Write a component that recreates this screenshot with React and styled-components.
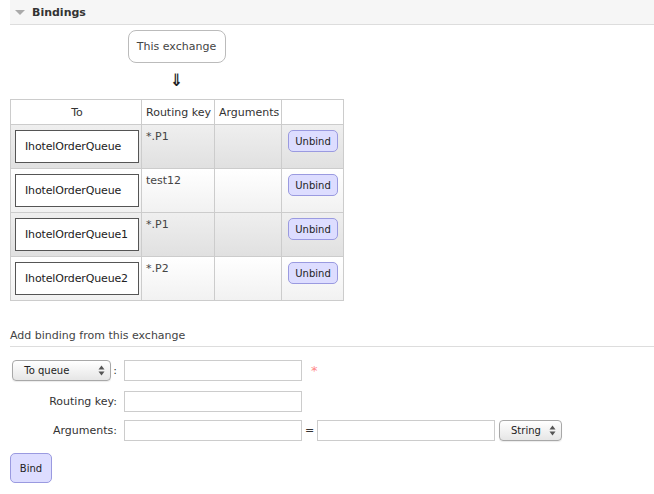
import React from 'react';
import styled, { createGlobalStyle } from 'styled-components';

const GlobalStyle = createGlobalStyle`
  body {
    margin: 0;
    background: #fff;
    font-family: "DejaVu Sans", Verdana, sans-serif;
    font-size: 11px;
    color: #444;
  }
`;

const Page = styled.div`
  padding-left: 10px;
`;

const SectionHeader = styled.h2`
  margin: 0;
  height: 24px;
  display: flex;
  align-items: center;
  gap: 7px;
  padding-left: 5px;
  background: #f6f6f6;
  border-bottom: 1px solid #ddd;
  font-size: 11px;
  font-weight: bold;
  color: #333;
`;

const Triangle = styled.span`
  width: 0;
  height: 0;
  border-left: 5px solid transparent;
  border-right: 5px solid transparent;
  border-top: 5px solid #aaa;
`;

const Diagram = styled.div`
  width: 333px;
  display: flex;
  flex-direction: column;
  align-items: center;
`;

const ExchangeBox = styled.div`
  margin-top: 5px;
  width: 98px;
  height: 33px;
  box-sizing: border-box;
  border: 1px solid #bbb;
  border-radius: 8px;
  display: flex;
  align-items: center;
  justify-content: center;
  color: #444;
`;

const Arrow = styled.div`
  margin: 8px 0 9px;
  height: 19px;
  line-height: 19px;
  font-family: "DejaVu Sans Condensed", "DejaVu Sans", sans-serif;
  font-size: 17px;
  font-weight: bold;
  color: #222;
`;

const Table = styled.table`
  border-collapse: collapse;
  table-layout: fixed;
  width: 334px;

  th,
  td {
    border: 1px solid #ccc;
  }
`;

const HeadCell = styled.th`
  height: 24px;
  padding: 0 2px 0 4px;
  white-space: nowrap;
  font-weight: normal;
  color: #333;
  text-align: ${p => (p.$center ? 'center' : 'left')};
`;

const Row = styled.tr`
  background: ${p =>
    p.$alt
      ? 'linear-gradient(#efefef, #e0e0e0)'
      : 'linear-gradient(#ffffff, #f1f1f1)'};
`;

const Cell = styled.td`
  vertical-align: top;
  height: 33px;
  padding: 5px 3px 5px 4px;
  color: #444;
  line-height: 14px;
`;

const QueueBox = styled.div`
  width: 124px;
  height: 33px;
  box-sizing: border-box;
  border: 1px solid #555;
  background: #fff;
  display: flex;
  align-items: center;
  padding-left: 9px;
  white-space: nowrap;
  letter-spacing: -0.15px;
  color: #222;
`;

const Button = styled.button`
  display: block;
  width: ${p => p.$w}px;
  height: ${p => p.$h}px;
  margin: ${p => p.$margin || 0};
  padding: 0;
  background: #ddf;
  border: 1px solid #9a9ae0;
  border-radius: 5px;
  font-family: "DejaVu Sans", Verdana, sans-serif;
  font-size: 10px;
  color: #222;
`;

const FormTitle = styled.h3`
  margin: 28px 0 0;
  padding-bottom: 3px;
  line-height: 14px;
  font-size: 11px;
  font-weight: normal;
  color: #444;
  border-bottom: 1px solid #ddd;
`;

const Form = styled.form`
  margin-top: 13px;
  display: flex;
  flex-direction: column;
  gap: ${p => p.$gap || 10}px;
`;

const FormRow = styled.div`
  display: flex;
  align-items: center;
  height: ${p => p.$h || 21}px;
  margin-bottom: ${p => p.$mb || 0}px;
`;

const LabelCell = styled.label`
  width: 107px;
  margin-right: 7px;
  display: flex;
  justify-content: flex-end;
  align-items: center;
  gap: 2px;
  color: #333;
`;

const TextInput = styled.input`
  width: 178px;
  height: 21px;
  box-sizing: border-box;
  border: 1px solid #ccc;
  margin: 0;
  padding: 0 3px;
`;

const Select = styled.div`
  width: ${p => p.$w}px;
  height: 21px;
  box-sizing: border-box;
  display: flex;
  align-items: center;
  justify-content: space-between;
  margin-left: ${p => p.$ml || 0}px;
  padding: 0 5px 0 ${p => p.$pl}px;
  background: linear-gradient(#ffffff, #e6e6e6);
  border: 1px solid #a8a8a8;
  border-radius: 4px;
  box-shadow: 0 1px 1px rgba(0, 0, 0, 0.08);
  font-size: 10px;
  color: #222;
`;

const Required = styled.span`
  margin-left: 9px;
  color: #f88;
  font-size: 13px;
`;

const Equals = styled.span`
  width: 15px;
  text-align: center;
  color: #333;
`;

const Updown = () => (
  <svg width="7" height="11" viewBox="0 0 7 11">
    <path d="M3.5 0.5 L6.5 4.5 H0.5 Z" fill="#555" />
    <path d="M3.5 10.5 L6.5 6.5 H0.5 Z" fill="#555" />
  </svg>
);

const bindings = [
  { queue: 'IhotelOrderQueue', key: '*.P1' },
  { queue: 'IhotelOrderQueue', key: 'test12' },
  { queue: 'IhotelOrderQueue1', key: '*.P1' },
  { queue: 'IhotelOrderQueue2', key: '*.P2' }
];

export default function App() {
  return (
    <Page>
      <GlobalStyle />
      <SectionHeader>
        <Triangle />
        Bindings
      </SectionHeader>
      <Diagram>
        <ExchangeBox>This exchange</ExchangeBox>
        <Arrow>⇓</Arrow>
      </Diagram>
      <Table>
        <colgroup>
          <col style={{ width: 131 }} />
          <col style={{ width: 73 }} />
          <col style={{ width: 67 }} />
          <col style={{ width: 62 }} />
        </colgroup>
        <thead>
          <tr>
            <HeadCell $center>To</HeadCell>
            <HeadCell>Routing key</HeadCell>
            <HeadCell>Arguments</HeadCell>
            <HeadCell />
          </tr>
        </thead>
        <tbody>
          {bindings.map((b, i) => (
            <Row key={i} $alt={i % 2 === 0}>
              <Cell>
                <QueueBox>{b.queue}</QueueBox>
              </Cell>
              <Cell>{b.key}</Cell>
              <Cell />
              <Cell>
                <Button type="button" $w={50} $h={22} $margin="0 auto">
                  Unbind
                </Button>
              </Cell>
            </Row>
          ))}
        </tbody>
      </Table>

      <FormTitle>Add binding from this exchange</FormTitle>
      <Form $gap={9}>
        <FormRow $mb={1}>
          <LabelCell>
            <Select $w={99} $pl={11}>
              To queue
              <Updown />
            </Select>
            :
          </LabelCell>
          <TextInput />
          <Required>*</Required>
        </FormRow>
        <FormRow $h={20}>
          <LabelCell>Routing key:</LabelCell>
          <TextInput />
        </FormRow>
        <FormRow $mb={3}>
          <LabelCell>Arguments:</LabelCell>
          <TextInput />
          <Equals>=</Equals>
          <TextInput />
          <Select $w={63} $pl={11} $ml={4}>
            String
            <Updown />
          </Select>
        </FormRow>
        <Button type="button" $w={42} $h={30}>
          Bind
        </Button>
      </Form>
    </Page>
  );
}
